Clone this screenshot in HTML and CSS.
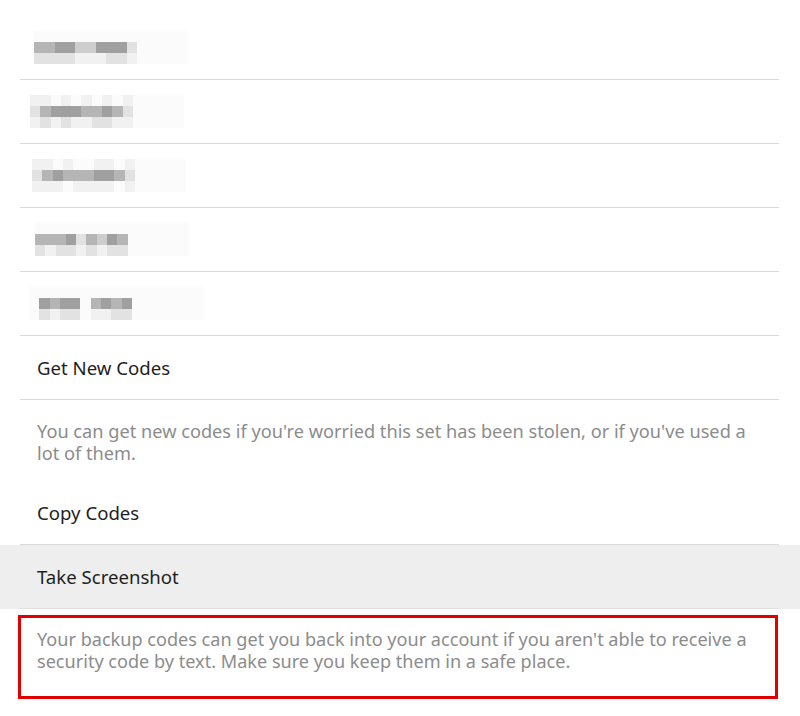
FILE: index.html
```html
<!DOCTYPE html>
<html>
<head>
<meta charset="utf-8">
<link rel="stylesheet" href="styles.css">
</head>
<body>
<div class="list">
  <div class="item code-item"><div class="item-inner">
    <div class="mosaic m1">
      <i class="s0"></i><i class="s0"></i><i class="s0"></i><i class="s0"></i><i class="s0"></i><i class="s0"></i><i class="s0"></i><i class="s0"></i><i class="s0"></i><i class="s0"></i><i class="s0"></i><i class="s0"></i><i class="s0"></i><i class="s0"></i><i class="s0"></i>
      <i class="s4"></i><i class="s4"></i><i class="s5"></i><i class="s5"></i><i class="s3"></i><i class="s3"></i><i class="s5"></i><i class="s5"></i><i class="s5"></i><i class="s2"></i><i class="s0"></i><i class="s0"></i><i class="s0"></i><i class="s0"></i><i class="s0"></i>
      <i class="s2"></i><i class="s2"></i><i class="s2"></i><i class="s2"></i><i class="s1"></i><i class="s1"></i><i class="s1"></i><i class="s2"></i><i class="s2"></i><i class="s1"></i><i class="s0"></i><i class="s0"></i><i class="s0"></i><i class="s0"></i><i class="s0"></i>
    </div>
  </div></div>
  <div class="item code-item"><div class="item-inner">
    <div class="mosaic m2">
      <i class="s1"></i><i class="s1"></i><i class="s0"></i><i class="s1"></i><i class="s0"></i><i class="s1"></i><i class="s0"></i><i class="s1"></i><i class="s0"></i><i class="s1"></i><i class="s0"></i><i class="s0"></i><i class="s0"></i><i class="s0"></i><i class="s0"></i>
      <i class="s2"></i><i class="s4"></i><i class="s5"></i><i class="s5"></i><i class="s5"></i><i class="s4"></i><i class="s4"></i><i class="s5"></i><i class="s4"></i><i class="s2"></i><i class="s0"></i><i class="s0"></i><i class="s0"></i><i class="s0"></i><i class="s0"></i>
      <i class="s1"></i><i class="s2"></i><i class="s1"></i><i class="s2"></i><i class="s1"></i><i class="s1"></i><i class="s2"></i><i class="s2"></i><i class="s1"></i><i class="s1"></i><i class="s0"></i><i class="s0"></i><i class="s0"></i><i class="s0"></i><i class="s0"></i>
    </div>
  </div></div>
  <div class="item code-item"><div class="item-inner">
    <div class="mosaic m3">
      <i class="s1"></i><i class="s1"></i><i class="s0"></i><i class="s1"></i><i class="s0"></i><i class="s0"></i><i class="s1"></i><i class="s1"></i><i class="s0"></i><i class="s1"></i><i class="s0"></i><i class="s0"></i><i class="s0"></i><i class="s0"></i><i class="s0"></i>
      <i class="s2"></i><i class="s4"></i><i class="s5"></i><i class="s4"></i><i class="s4"></i><i class="s4"></i><i class="s5"></i><i class="s5"></i><i class="s4"></i><i class="s2"></i><i class="s0"></i><i class="s0"></i><i class="s0"></i><i class="s0"></i><i class="s0"></i>
      <i class="s1"></i><i class="s1"></i><i class="s1"></i><i class="s0"></i><i class="s1"></i><i class="s1"></i><i class="s1"></i><i class="s1"></i><i class="s0"></i><i class="s1"></i><i class="s0"></i><i class="s0"></i><i class="s0"></i><i class="s0"></i><i class="s0"></i>
    </div>
  </div></div>
  <div class="item code-item"><div class="item-inner">
    <div class="mosaic m4">
      <i class="s0"></i><i class="s0"></i><i class="s0"></i><i class="s0"></i><i class="s0"></i><i class="s0"></i><i class="s0"></i><i class="s0"></i><i class="s0"></i><i class="s0"></i><i class="s0"></i><i class="s0"></i><i class="s0"></i><i class="s0"></i><i class="s0"></i>
      <i class="s4"></i><i class="s4"></i><i class="s4"></i><i class="s5"></i><i class="s2"></i><i class="s4"></i><i class="s3"></i><i class="s5"></i><i class="s4"></i><i class="s0"></i><i class="s0"></i><i class="s0"></i><i class="s0"></i><i class="s0"></i><i class="s0"></i>
      <i class="s2"></i><i class="s1"></i><i class="s2"></i><i class="s2"></i><i class="s1"></i><i class="s2"></i><i class="s1"></i><i class="s2"></i><i class="s2"></i><i class="s0"></i><i class="s0"></i><i class="s0"></i><i class="s0"></i><i class="s0"></i><i class="s0"></i>
    </div>
  </div></div>
  <div class="item code-item"><div class="item-inner">
    <div class="mosaic m5">
      <i class="s0"></i><i class="s0"></i><i class="s0"></i><i class="s0"></i><i class="s0"></i><i class="s0"></i><i class="s0"></i><i class="s0"></i><i class="s0"></i><i class="s0"></i><i class="s0"></i><i class="s0"></i><i class="s0"></i><i class="s0"></i><i class="s0"></i><i class="s0"></i><i class="s0"></i>
      <i class="s0"></i><i class="s5"></i><i class="s4"></i><i class="s5"></i><i class="s5"></i><i class="s0"></i><i class="s4"></i><i class="s5"></i><i class="s4"></i><i class="s5"></i><i class="s0"></i><i class="s0"></i><i class="s0"></i><i class="s0"></i><i class="s0"></i><i class="s0"></i><i class="s0"></i>
      <i class="s0"></i><i class="s2"></i><i class="s1"></i><i class="s2"></i><i class="s2"></i><i class="s0"></i><i class="s1"></i><i class="s1"></i><i class="s2"></i><i class="s2"></i><i class="s0"></i><i class="s0"></i><i class="s0"></i><i class="s0"></i><i class="s0"></i><i class="s0"></i><i class="s0"></i>
    </div>
  </div></div>

  <div class="item action"><div class="item-inner">Get New Codes</div></div>
  <div class="item desc"><p class="desc-text">You can get new codes if you're worried this set has been stolen, or if you've used a lot of them.</p></div>
  <div class="item action"><div class="item-inner">Copy Codes</div></div>
  <div class="item action pressed"><div class="item-inner">Take Screenshot</div></div>
</div>
<div class="note">
  <p class="note-text">Your backup codes can get you back into your account if you aren't able to receive a security code by text. Make sure you keep them in a safe place.</p>
</div>
</body>
</html>
```

FILE: styles.css
```css
html, body {
  margin: 0;
  padding: 0;
  background: #ffffff;
}
body {
  font-family: "Noto Sans", "Open Sans", sans-serif;
  width: 800px;
  height: 716px;
  overflow: hidden;
}
.list {
  padding-top: 16px;
}
.item {
  padding: 0 21px 0 20px;
}
.item-inner {
  height: 63px;
  border-bottom: 1px solid #d9d9d9;
  display: flex;
  align-items: center;
  padding-left: 17px;
  font-size: 18.6px;
  color: #1e1e1e;
}
.code-item .item-inner {
  padding-left: 0;
}
.mosaic {
  display: grid;
  grid-template-columns: repeat(15, 10.3px);
  grid-auto-rows: 11px;
}
.mosaic.m5 {
  grid-template-columns: repeat(17, 10.3px);
}
.mosaic i {
  display: block;
}
.m1 { margin-left: 14px; }
.m2 { margin-left: 10px; }
.m3 { margin-left: 12px; }
.m4 { margin-left: 15px; }
.m5 { margin-left: 9px; }
.s0 { background: #fbfbfb; }
.s1 { background: #f1f1f1; }
.s2 { background: #e2e2e2; }
.s3 { background: #cdcdcd; }
.s4 { background: #b5b5b5; }
.s5 { background: #a0a0a0; }
.desc {
  padding: 20px 21px 17px 20px;
}
.desc-text {
  margin: 0;
  padding: 0 17px;
  font-size: 18.2px;
  line-height: 22px;
  color: #8c8c8c;
}
.action.pressed {
  background: #eeeeee;
}
.action.pressed .item-inner {
  border-bottom-color: #e0e0e0;
}
.note {
  box-sizing: border-box;
  margin: 6px 0 0 18px;
  width: 760px;
  height: 84px;
  border: 3px solid #e30000;
  padding: 10px 18px 0 16px;
}
.note-text {
  margin: 0;
  font-size: 18.1px;
  line-height: 22px;
  color: #8c8c8c;
}
```
